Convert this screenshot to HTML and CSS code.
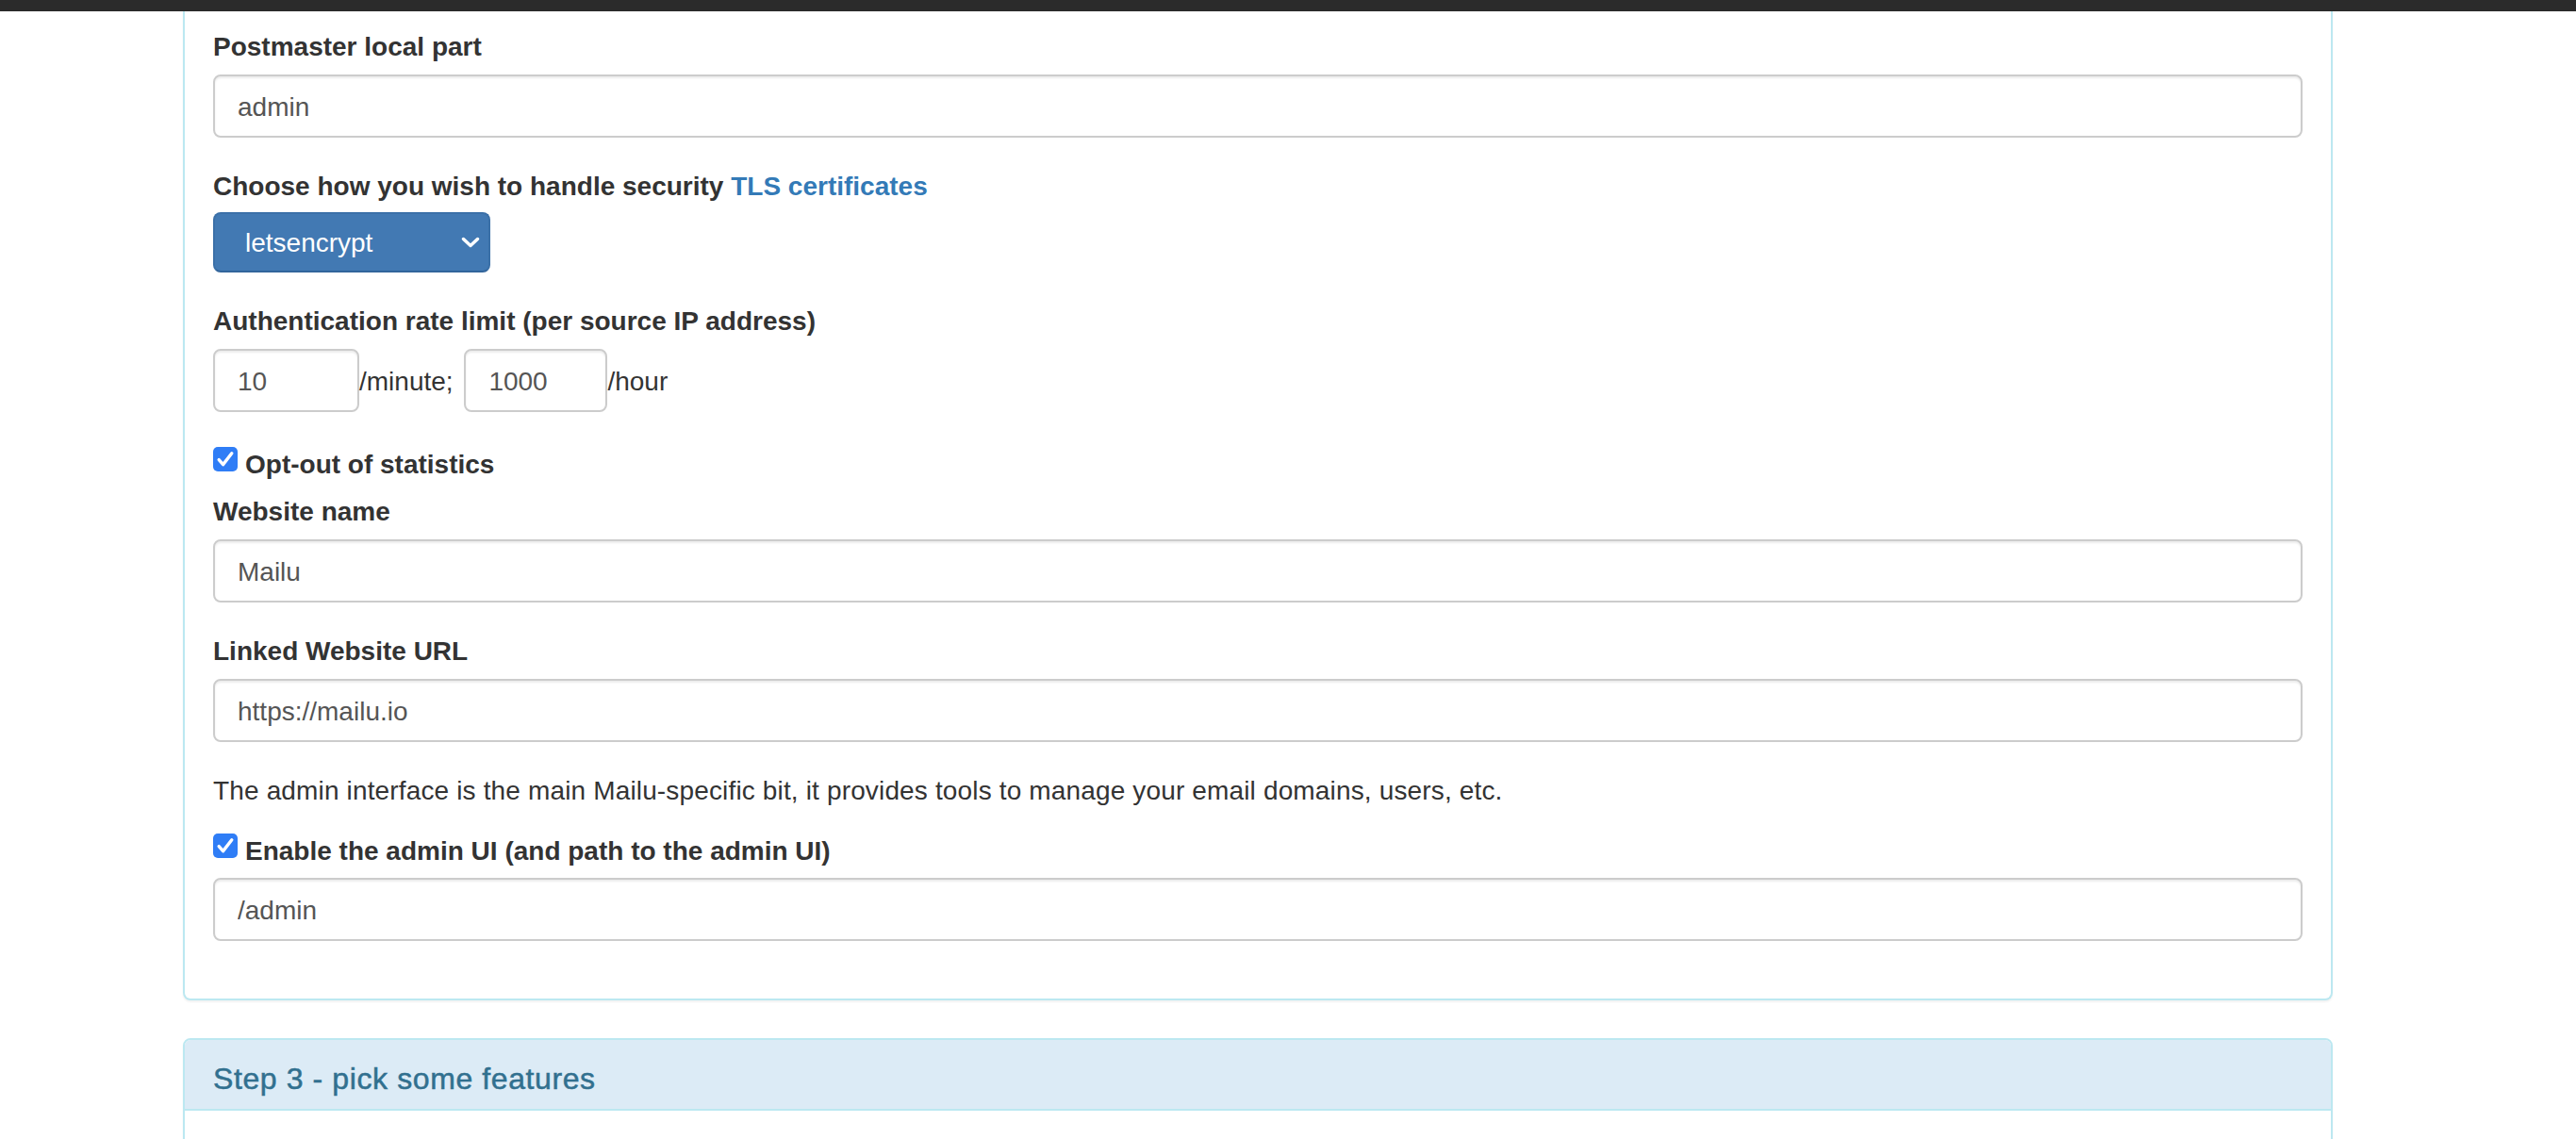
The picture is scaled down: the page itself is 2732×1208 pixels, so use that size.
FILE: index.html
```html
<!DOCTYPE html>
<html lang="en">
<head>
<meta charset="utf-8">
<title>Mailu setup</title>
<link rel="stylesheet" href="styles.css">
</head>
<body>
<div class="topbar"></div>
<div class="page">
  <div class="panel panel-cut">
    <div class="panel-body body-first">
      <div class="form-group">
        <label class="lbl">Postmaster local part</label>
        <input class="form-control" type="text" value="admin">
      </div>
      <div class="form-group">
        <label class="lbl lbl-select">Choose how you wish to handle security <a class="link" href="#">TLS certificates</a></label>
        <div class="select-btn">
          <span class="select-text">letsencrypt</span>
          <svg class="chev" width="20" height="12" viewBox="0 0 20 12"><path d="M2.5 2.5 L10 9.5 L17.5 2.5" fill="none" stroke="#fff" stroke-width="3.4" stroke-linecap="round" stroke-linejoin="round"/></svg>
        </div>
      </div>
      <div class="form-group group-rate">
        <label class="lbl">Authentication rate limit (per source IP address)</label>
        <div class="rate-row"><input class="form-control rate rate-min" type="text" value="10">/minute; <input class="form-control rate rate-hour" type="text" value="1000">/hour</div>
      </div>
      <div class="check-row">
        <svg class="cb" width="26" height="26" viewBox="0 0 26 26"><rect x="0" y="0" width="26" height="26" rx="5" fill="#2f7df6"/><path d="M6.2 13.6 L10.6 18.6 L19.8 6.8" fill="none" stroke="#fff" stroke-width="3.4" stroke-linecap="round" stroke-linejoin="round"/></svg>
        <span class="check-text">Opt-out of statistics</span>
      </div>
      <div class="form-group">
        <label class="lbl">Website name</label>
        <input class="form-control" type="text" value="Mailu">
      </div>
      <div class="form-group">
        <label class="lbl">Linked Website URL</label>
        <input class="form-control" type="text" value="https://mailu.io">
      </div>
      <p class="help">The admin interface is the main Mailu-specific bit, it provides tools to manage your email domains, users, etc.</p>
      <div class="check-row">
        <svg class="cb" width="26" height="26" viewBox="0 0 26 26"><rect x="0" y="0" width="26" height="26" rx="5" fill="#2f7df6"/><path d="M6.2 13.6 L10.6 18.6 L19.8 6.8" fill="none" stroke="#fff" stroke-width="3.4" stroke-linecap="round" stroke-linejoin="round"/></svg>
        <span class="check-text">Enable the admin UI (and path to the admin UI)</span>
      </div>
      <div class="form-group">
        <input class="form-control" type="text" value="/admin">
      </div>
    </div>
  </div>

  <div class="panel panel-info">
    <div class="panel-heading">
      <h3 class="panel-title">Step 3 - pick some features</h3>
    </div>
    <div class="panel-body body-rest"></div>
  </div>
</div>
</body>
</html>
```

FILE: styles.css
```css
html, body {
  margin: 0;
  padding: 0;
  background: #ffffff;
}
body {
  font-family: "Liberation Sans", Arial, Helvetica, sans-serif;
  font-size: 28px;
  line-height: 40px;
  color: #333333;
  height: 1208px;
  overflow: hidden;
}
.topbar {
  height: 12px;
  background: #2b2b2b;
}
.page {
  margin-left: 194px;
  width: 2280px;
}
.panel {
  box-sizing: border-box;
  background: #ffffff;
  border: 2px solid #bce8f1;
  border-radius: 8px;
  box-shadow: 0 2px 2px rgba(0, 0, 0, 0.05);
}
.panel-cut {
  border-top: none;
  border-radius: 0 0 8px 8px;
  margin-bottom: 40px;
}
.panel-body {
  padding: 0 30px 31px 30px;
}
.body-first {
  padding-top: 16px;
}
.form-group {
  margin-bottom: 30px;
}
.lbl {
  display: block;
  box-sizing: border-box;
  font-weight: bold;
  margin-bottom: 11px;
  height: 40px;
  padding-top: 2px;
}
.lbl-select {
  margin-bottom: 9px;
}
.link {
  color: #337ab7;
  text-decoration: none;
}
.form-control {
  display: block;
  box-sizing: border-box;
  width: 100%;
  height: 67px;
  margin: 0;
  padding: 2px 24px 0 24px;
  font-family: "Liberation Sans", Arial, Helvetica, sans-serif;
  font-size: 28px;
  color: #555555;
  background: #ffffff;
  border: 2px solid #cccccc;
  border-radius: 8px;
  box-shadow: inset 0 2px 2px rgba(0, 0, 0, 0.075);
  outline: none;
}
.select-btn {
  box-sizing: border-box;
  width: 294px;
  height: 64px;
  display: flex;
  align-items: center;
  justify-content: space-between;
  padding: 0 9px 0 32px;
  background: #4279b3;
  border: 2px solid #3b70a8;
  border-bottom-color: #32659b;
  border-radius: 8px;
  color: #ffffff;
}
.select-text {
  padding-top: 2px;
}
.chev {
  display: block;
}
.group-rate {
  margin-bottom: 34px;
}
.rate-row {
  height: 67px;
}
.rate {
  display: inline-block;
  vertical-align: baseline;
}
.rate-min {
  width: 155px;
}
.rate-hour {
  width: 152px;
  margin-left: 4px;
}
.check-row {
  display: flex;
  align-items: flex-start;
  height: 40px;
  margin-bottom: 10px;
}
.cb {
  display: block;
  flex: none;
  margin-top: 3px;
  margin-right: 8px;
}
.check-text {
  font-weight: bold;
  padding-top: 2px;
}
.help {
  margin: 0 0 24px 0;
  height: 40px;
  box-sizing: border-box;
  padding-top: 2px;
  letter-spacing: 0.15px;
}
.panel-info {
  border-color: #bce8f1;
}
.panel-heading {
  background: #dcebf6;
  color: #31708f;
  border-bottom: 2px solid #bce8f1;
  border-radius: 6px 6px 0 0;
  padding: 24px 30px 14px 30px;
}
.panel-title {
  margin: 0;
  font-size: 32px;
  font-weight: normal;
  line-height: 35px;
  letter-spacing: 0.6px;
  -webkit-text-stroke: 0.5px #31708f;
}
.body-rest {
  height: 300px;
}
```
